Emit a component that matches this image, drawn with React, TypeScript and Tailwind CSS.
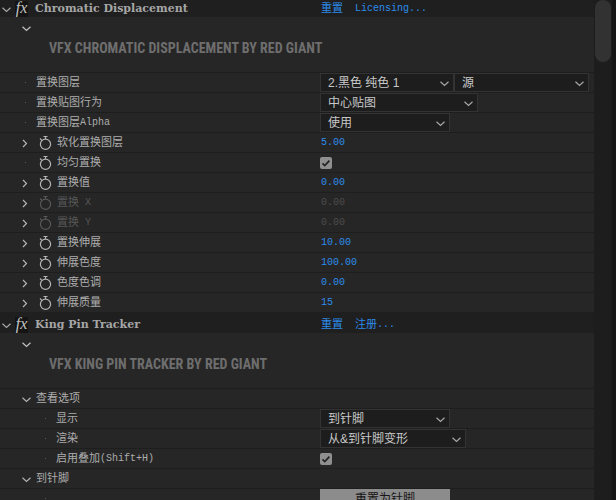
import { useId, useState } from "react";
import clsx from "clsx";

type RowData = {
  label: string;
  marker?: "dot" | "right" | "down";
  nested?: boolean;
  keyframe?: boolean;
  disabled?: boolean;
  value?: string;
  checked?: boolean;
  selects?: { value: string; width: string }[];
  button?: string;
};

const displacementRows: RowData[] = [
  {
    label: "置换图层",
    selects: [
      { value: "2.黑色 纯色 1", width: "w-[134px]" },
      { value: "源", width: "w-[135px]" },
    ],
  },
  { label: "置换贴图行为", selects: [{ value: "中心贴图", width: "w-[158px]" }] },
  { label: "置换图层Alpha", selects: [{ value: "使用", width: "w-[130px]" }] },
  { label: "软化置换图层", marker: "right", keyframe: true, value: "5.00" },
  { label: "均匀置换", keyframe: true, checked: true },
  { label: "置换值", marker: "right", keyframe: true, value: "0.00" },
  { label: "置换 X", marker: "right", keyframe: true, value: "0.00", disabled: true },
  { label: "置换 Y", marker: "right", keyframe: true, value: "0.00", disabled: true },
  { label: "置换伸展", marker: "right", keyframe: true, value: "10.00" },
  { label: "伸展色度", marker: "right", keyframe: true, value: "100.00" },
  { label: "色度色调", marker: "right", keyframe: true, value: "0.00" },
  { label: "伸展质量", marker: "right", keyframe: true, value: "15" },
];

const trackerRows: RowData[] = [
  { label: "查看选项", marker: "down" },
  { label: "显示", nested: true, selects: [{ value: "到针脚", width: "w-[130px]" }] },
  { label: "渲染", nested: true, selects: [{ value: "从&到针脚变形", width: "w-[146px]" }] },
  { label: "启用叠加(Shift+H)", nested: true, checked: true },
  { label: "到针脚", marker: "down" },
  { label: "", nested: true, button: "重置为针脚" },
];

function Chevron({ right = false }: { right?: boolean }) {
  return (
    <svg viewBox="0 0 16 16" className="size-4 shrink-0" fill="none" stroke="currentColor" strokeWidth="1.2">
      <path d={right ? "M6 5l3.5 3.5L6 12" : "M5.5 6.8l4 3.6 4-3.6"} />
    </svg>
  );
}

function Stopwatch() {
  return (
    <svg viewBox="0 0 18 16" className="h-4 w-[18px]" fill="none" stroke="currentColor" strokeWidth="1.2">
      <circle cx="9.5" cy="9.2" r="5.1" />
      <path d="M7.5 1.5h4M9.5 1.5v2.6M4 3.5l1.8 1.8" />
    </svg>
  );
}

// Latin runs are set one size below the Chinese text around them
function Label({ text }: { text: string }) {
  return (
    <span className="flex items-center">
      {text.split(/([\x20-\x7e]+)/).map((part, i) => (
        <span key={i} className={i % 2 ? "whitespace-pre text-[10px]" : undefined}>
          {part}
        </span>
      ))}
    </span>
  );
}

function Dropdown({ id, label, value, width }: { id?: string; label?: string; value: string; width: string }) {
  return (
    <div className={clsx("relative h-[19px] text-[#c8c8c8]", width)}>
      <select
        id={id}
        aria-label={label}
        defaultValue={value}
        className="block h-full w-full appearance-none border border-[#333333] bg-[#1d1d1d] pr-5 pl-[7px] font-['Liberation_Sans','Noto_Sans_CJK_SC',sans-serif] text-xs leading-4 outline-none"
      >
        <option>{value}</option>
      </select>
      <span className="pointer-events-none absolute inset-y-0 right-[3px] flex items-center text-[#a8a8a8]">
        <Chevron />
      </span>
    </div>
  );
}

function Checkbox({ id }: { id: string }) {
  const [checked, setChecked] = useState(true);

  return (
    <span className="relative block size-3">
      <input
        id={id}
        type="checkbox"
        checked={checked}
        onChange={(event) => setChecked(event.target.checked)}
        className="block size-3 appearance-none rounded-xs bg-[#8f8f8f]"
      />
      {checked ? (
        <svg viewBox="0 0 12 12" className="pointer-events-none absolute inset-0" fill="none" stroke="#232323" strokeWidth="1.7">
          <path d="M2.5 6.3l2.3 2.3 4.6-5" />
        </svg>
      ) : null}
    </span>
  );
}

function Row({ row }: { row: RowData }) {
  const id = useId();
  const { label, marker = "dot", nested, keyframe, disabled, value, checked, selects, button } = row;

  return (
    <div className="flex min-h-5 items-center border-t border-[#1e1e1e]">
      <div className={clsx("flex w-80 shrink-0 items-center gap-[3px]", nested ? "pl-[37px]" : "pl-[17px]")}>
        {marker === "dot" ? (
          <span className="flex w-4 justify-center">
            <span className="size-px bg-[#5a5a5a]" />
          </span>
        ) : (
          <button type="button" aria-label={label} className="text-[#b4b4b4]">
            <Chevron right={marker === "right"} />
          </button>
        )}
        {keyframe ? (
          <button type="button" aria-label={`${label} 关键帧`} disabled={disabled} className={disabled ? "text-[#585858]" : "text-[#b4b4b4]"}>
            <Stopwatch />
          </button>
        ) : null}
        <label htmlFor={id} className={clsx("text-[11px] leading-4", disabled ? "text-[#565656]" : "text-[#adadad]")}>
          <Label text={label} />
        </label>
      </div>

      {selects?.map((select, i) => (
        <Dropdown key={select.value} id={i ? undefined : id} label={i ? label : undefined} {...select} />
      ))}
      {checked ? <Checkbox id={id} /> : null}
      {value ? (
        <input
          id={id}
          defaultValue={value}
          disabled={disabled}
          className={clsx("h-4 w-20 bg-transparent pl-px text-[10px] outline-none", disabled ? "text-[#4c4c4c]" : "text-[#2d8ceb]")}
        />
      ) : null}
      {button ? (
        <button
          id={id}
          type="button"
          className="h-[19px] w-[130px] bg-[#8c8c8c] font-['Liberation_Sans','Noto_Sans_CJK_SC',sans-serif] text-xs leading-4 text-[#161616]"
        >
          {button}
        </button>
      ) : null}
    </div>
  );
}

function Effect({ name, title, license, rows }: { name: string; title: string; license: string; rows: RowData[] }) {
  return (
    <section>
      <header className="flex h-[21px] items-center bg-[#1f1f1f] pt-1">
        <div className="flex w-80 shrink-0 items-center">
          <button type="button" aria-label="折叠" className="-ml-[3px] text-[#a8a8a8]">
            <Chevron />
          </button>
          <span className="ml-0.5 h-4 w-[13px] bg-[#141414] text-center font-['Liberation_Serif',serif] text-base leading-[14px] text-[#c4c4c4] italic">
            fx
          </span>
          <h2 className="ml-[7px] font-['DejaVu_Serif',serif] text-[11px] leading-4 font-bold text-[#a6a6a6]">{name}</h2>
        </div>
        <a href="#reset" className="w-[34px] pl-px text-[11px] leading-4 text-[#2d8ceb]">
          重置
        </a>
        <a href="#license" className="pl-px text-[11px] leading-4 text-[#2d8ceb]">
          <Label text={license} />
        </a>
      </header>

      <div className="h-[55px] pt-[3px] pl-[17px]">
        <button type="button" aria-label={title} className="block text-[#c4c4c4]">
          <Chevron />
        </button>
        <h3 className="mt-0.5 pl-8 font-['Roboto_Condensed',Roboto,sans-serif] text-sm leading-5 font-bold whitespace-nowrap text-[#6e6e6e]">
          {title}
        </h3>
      </div>

      {rows.map((row, i) => (
        <Row key={i} row={row} />
      ))}
    </section>
  );
}

export default function App() {
  return (
    <div className="flex h-screen overflow-hidden bg-[#161616] font-['Liberation_Mono','Noto_Sans_CJK_SC',monospace]">
      <main className="-mt-1 min-w-0 flex-1 bg-[#262626]">
        <Effect
          name="Chromatic Displacement"
          title="VFX CHROMATIC DISPLACEMENT BY RED GIANT"
          license="Licensing..."
          rows={displacementRows}
        />
        <Effect name="King Pin Tracker" title="VFX KING PIN TRACKER BY RED GIANT" license="注册..." rows={trackerRows} />
      </main>
      <div className="mr-1 w-[18px] bg-[#1d1d1d] px-px">
        <div className="h-[62px] rounded-full bg-[#323232]" />
      </div>
    </div>
  );
}
